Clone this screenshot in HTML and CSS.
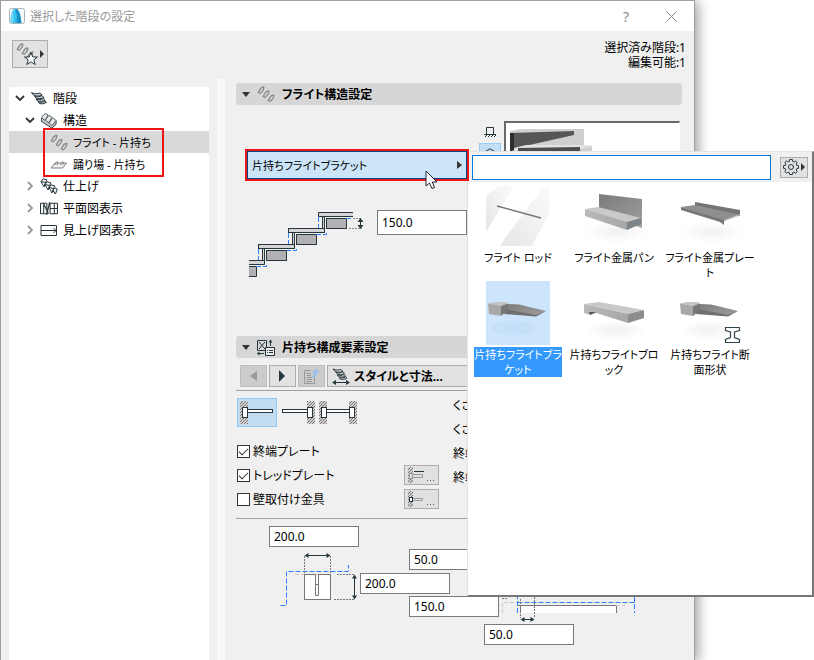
FILE: index.html
```html
<!DOCTYPE html>
<html lang="ja">

<head>
    <meta charset="UTF-8">
    <meta name="viewport" content="width=device-width, initial-scale=1.0">
    <title>選択した階段の設定</title>
    <link rel="stylesheet" href="styles.css">
</head>

<body>
    <!-- 共通アイコン -->
    <svg class="defs" width="0" height="0" aria-hidden="true">
        <defs>
            <linearGradient id="metal" x1="0" y1="0" x2="1" y2="1">
                <stop offset="0" stop-color="#7b7b7b" />
                <stop offset="1" stop-color="#a09f9e" />
            </linearGradient>
            <linearGradient id="stone" x1="0" y1="0" x2="1" y2="0">
                <stop offset="0" stop-color="#b9b9b9" />
                <stop offset="1" stop-color="#a6a6a6" />
            </linearGradient>
            <linearGradient id="sail" x1="0" y1="0" x2="1" y2="0">
                <stop offset="0" stop-color="#8fe3fb" />
                <stop offset="1" stop-color="#12b5ea" />
            </linearGradient>
            <linearGradient id="glass" x1="1" y1="0" x2="0" y2="1">
                <stop offset="0" stop-color="#fbfbfb" />
                <stop offset="1" stop-color="#e6e6e6" />
            </linearGradient>
            <radialGradient id="shade">
                <stop offset="0" stop-color="#000" stop-opacity=".06" />
                <stop offset="1" stop-color="#000" stop-opacity="0" />
            </radialGradient>
            <pattern id="hatch" width="3" height="3" patternUnits="userSpaceOnUse">
                <rect width="3" height="3" fill="#d0d0d0" />
                <path d="M0 3L3 0" stroke="#777" />
            </pattern>
        </defs>
        <symbol id="flight" viewBox="0 0 18 16">
            <g fill="#a9aeae" stroke="#7d8282" stroke-linejoin="round">
                <path d="M1 6.500L4 1.500L7 .800L6.500 4L3.500 7.500Z" />
                <path d="M6 10.500L9 5.500L12 4.800L11.500 8L8.500 11.500Z" />
                <path d="M11 14.500L14 9.500L17 8.800L16.500 12L13.500 15.500Z" />
                <path d="M3 6L5.500 2.500M8 10L10.500 6.500M13 14L15.500 10.500" stroke="#e4e6e6" />
            </g>
        </symbol>
        <symbol id="landing" viewBox="0 0 18 10">
            <g fill="#eee" stroke="#7d8282">
                <path d="M1 8.500L5 3.500H16.500L12.500 8.500Z" />
                <path d="M5 5.500L6.500 2.500H8L7 5.500M10.500 5.500L12 2.500H13.500L12.500 5.500" />
            </g>
        </symbol>
        <symbol id="stair" viewBox="0 0 16 13">
            <g fill="#c9ced0" stroke="#27363d" stroke-linejoin="round">
                <path d="M.5 1C3 2.500 6 2.500 9 1.500L11 3.500C8 5 5 5 2.500 3.500Z" />
                <path d="M3.500 4.500C6 5.500 9 5.500 11 4L13 6C10 7.500 7.500 7.500 5 6.500Z" />
                <path d="M5 7.500C7.500 8.300 10 8.300 12.500 7L14 9C12 10 9 10 6.500 9.500Z" />
                <path d="M7 10.500C9 11 12 11 14 9.500L15.500 11C13 12.500 10.500 12.500 8.500 12Z" />
            </g>
        </symbol>
        <symbol id="structure" viewBox="0 0 18 18">
            <g fill="#dfe2e3" stroke="#555f64" stroke-linejoin="round">
                <path d="M1 6.500V10L12 17L16.500 13V9" fill="#c3c8ca" stroke="#27363d" />
                <path d="M1 6L5 1.500L8 3L5 9ZM5 8.500L9 3.500L12 5.500L9 11.500ZM9 11.500L13 6L16.500 9L12 14.500Z" />
                <path d="M3 6L6 3M7 9L10 5.500M11 12L14.500 8.500" stroke="#fff" />
            </g>
        </symbol>
        <symbol id="finish" viewBox="0 0 18 17">
            <g fill="#f4f5f6" stroke="#27363d" stroke-linejoin="round">
                <path d="M1 3.500L3 .800L7 2L5.500 4.500Z" />
                <path d="M5 6.500L7 3.800L11 5L9.500 7.500Z" />
                <path d="M9 9.500L11 6.800L15 8L13.500 10.500Z" />
                <path d="M13 12.500L14.500 9.800L17.300 11L15.500 16Z" />
                <path d="M1 3.500L4 9L5.500 4.500M5 6.500L8 12L9.500 7.500M9 9.500L12 15L13.500 10.500M13 12.500L15.500 16" fill="none" />
            </g>
        </symbol>
        <symbol id="plan" viewBox="0 0 17 13">
            <path d="M.5 1.500H6.500M.5 11.500H6.500M.5 1.500V11.500M3.500 1.500V11.500M3.500 2L8 11.500M6.500 1.500V11.500M9 .5L6.500 12.500M9.500 1.500H16.500M9.500 11.500H16.500M9.500 1.500V11.500M13.500 1.500V11.500M16.500 1.500V11.500M9.500 6.500H16.500" fill="none" stroke="#27363d" />
        </symbol>
        <symbol id="ceiling" viewBox="0 0 18 17">
            <path d="M1 3.500H16.500V13.500H1ZM1 8.500H16M13.500 6L16 8.500L13.500 11" fill="none" stroke="#27363d" />
        </symbol>
        <symbol id="chevron" viewBox="0 0 10 10">
            <path d="M1 3L5 7L9 3" fill="none" stroke="currentColor" stroke-width="1.800" />
        </symbol>
        <symbol id="bracket" viewBox="0 0 64 64">
            <path d="M21 23L33 23.500L60 30L50 35L18 32Z" fill="url(#metal)" />
            <path d="M20 28L50 34L60 30L50 35.500L18 33Z" fill="#6f6f6f" />
            <path d="M2 22.500L9 21H20L22 22.500L15 25Z" fill="#c4c4c4" />
            <path d="M2 22.500L15 25V35L3 33Z" fill="#a8a8a8" />
            <path d="M15 25L22 22.500V29L15 35Z" fill="#777" />
        </symbol>
    </svg>

    <div class="dialog">
        <header class="titlebar">
            <svg class="app-icon" width="16" height="16" viewBox="0 0 16 16">
                <rect x=".5" y=".5" width="15" height="15" rx="2" fill="#f7f9fa" stroke="#a9b4ba" />
                <path d="M1 15C1 8 3 2 5 1H7C7.500 5 8 10 8 15Z" fill="url(#sail)" />
                <path d="M6.500 1H8C11 3 12 9 12.500 15H8C8 10 7.500 5 6.500 1Z" fill="#1591c9" />
            </svg>
            <h1>選択した階段の設定</h1>
            <button class="title-btn" type="button" aria-label="ヘルプ">?</button>
            <button class="title-btn" type="button" aria-label="閉じる">
                <svg width="11" height="11" viewBox="0 0 11 11"><path d="M.5 .5L10.500 10.500M10.500 .5L.5 10.500" stroke="#888" /></svg>
            </button>
        </header>

        <div class="toolbar">
            <button class="favorite" type="button" aria-label="お気に入り">
                <svg width="32" height="24" viewBox="0 0 32 24">
                    <use href="#flight" x="2" y="1" width="18" height="16" />
                    <path d="M17 10.500L18.800 15H23.500L19.800 17.800L21.200 22.500L17 19.800L12.800 22.500L14.200 17.800L10.500 15H15.200Z" fill="#fff" stroke="#27363d" />
                    <path d="M26 8V16L30 12Z" fill="#333" />
                </svg>
            </button>
            <p class="status">選択済み階段:1<br>編集可能:1</p>
        </div>

        <main class="main">
            <nav class="sidebar">
                <ul class="tree">
                    <li>
                        <div class="node"><svg class="arrow"><use href="#chevron" /></svg><svg class="icon small"><use href="#stair" /></svg>階段</div>
                        <ul class="level-2">
                            <li>
                                <div class="node"><svg class="arrow"><use href="#chevron" /></svg><svg class="icon"><use href="#structure" /></svg>構造</div>
                                <ul class="level-3 marked">
                                    <li><div class="node active"><svg class="icon"><use href="#flight" /></svg>フライト - 片持ち</div></li>
                                    <li><div class="node"><svg class="icon"><use href="#landing" /></svg>踊り場 - 片持ち</div></li>
                                </ul>
                            </li>
                            <li><div class="node"><svg class="arrow closed"><use href="#chevron" /></svg><svg class="icon"><use href="#finish" /></svg>仕上げ</div></li>
                            <li><div class="node"><svg class="arrow closed"><use href="#chevron" /></svg><svg class="icon"><use href="#plan" /></svg>平面図表示</div></li>
                            <li><div class="node"><svg class="arrow closed"><use href="#chevron" /></svg><svg class="icon"><use href="#ceiling" /></svg>見上げ図表示</div></li>
                        </ul>
                    </li>
                </ul>
            </nav>
            <div class="splitter"></div>

            <div class="content">
                <!-- フライト構造設定 -->
                <section class="panel-flight">
                    <h2 class="panel-title">
                        <svg width="8" height="5" viewBox="0 0 8 5"><path d="M0 0H8L4 5Z" fill="#333" /></svg>
                        <svg width="18" height="16"><use href="#flight" /></svg>
                        フライト構造設定
                    </h2>
                    <div class="flight-body">
                        <div class="flight-left">
                            <div class="combo">
                                <button class="combo-btn" type="button" aria-haspopup="true" aria-expanded="true">
                                    片持ちフライトブラケット
                                    <svg width="5" height="8" viewBox="0 0 5 8"><path d="M0 0V8L5 4Z" fill="#333" /></svg>
                                </button>
                                <svg class="cursor" width="13" height="20" viewBox="0 0 13 20">
                                    <path d="M1 1V16L4.500 13L7 18.500L9.500 17.500L7.300 12H12Z" fill="#fff" stroke="#223" />
                                </svg>

                                <!-- ポップアップ -->
                                <div class="popup">
                                    <div class="popup-bar">
                                        <input class="search" type="text" aria-label="検索">
                                        <button class="gear" type="button" aria-label="表示設定">
                                            <svg width="24" height="18" viewBox="0 0 24 18">
                                                <g fill="none" stroke="#27363d">
                                                    <circle cx="9" cy="9" r="2.500" />
                                                    <path d="M7.600 1.500H10.400L10.700 3.500L12.200 4.100L13.700 3L15.300 4.600L14.200 6.100L14.700 7.400L16.500 7.700V10.300L14.700 10.700L14.100 12.100L15.200 13.600L13.500 15.200L12 14.100L10.700 14.600L10.400 16.500H7.700L7.300 14.600L6 14.100L4.500 15.200L2.800 13.500L3.900 12L3.300 10.700L1.500 10.300V7.700L3.300 7.400L3.900 6L2.800 4.500L4.500 2.900L6 4L7.300 3.500Z" />
                                                </g>
                                                <path d="M19 5V13L23 9Z" fill="#333" />
                                            </svg>
                                        </button>
                                    </div>
                                    <ul class="gallery">
                                        <li>
                                            <svg class="thumb" viewBox="0 0 64 64">
                                                <path d="M0 12L13 2H28L0 48Z" fill="url(#glass)" />
                                                <path d="M22 50L56 5L63 1V30L46 62H14Z" fill="url(#glass)" />
                                                <path d="M11 22L55 34" stroke="#777" stroke-width="1.500" />
                                            </svg>
                                            <span>フライト ロッド</span>
                                        </li>
                                        <li>
                                            <svg class="thumb" viewBox="0 0 64 64">
                                                <ellipse cx="34" cy="48" rx="32" ry="11" fill="url(#shade)" />
                                                <path d="M17 10L60 15V44L17 28Z" fill="url(#metal)" />
                                                <path d="M3 25L16 23L59 34L45 39Z" fill="#c9c9c9" />
                                                <path d="M3 25L45 38V46L3 32Z" fill="url(#stone)" />
                                                <path d="M45 38L59 34V40L45 46Z" fill="#7d8488" />
                                            </svg>
                                            <span>フライト金属パン</span>
                                        </li>
                                        <li>
                                            <svg class="thumb" viewBox="0 0 64 64">
                                                <ellipse cx="34" cy="48" rx="32" ry="11" fill="url(#shade)" />
                                                <path d="M17 18L62 26V32L17 24Z" fill="#747474" />
                                                <path d="M3 23L17 21L62 31L46 37Z" fill="#8f8f8f" />
                                                <path d="M3 23L46 36V41L42 38L3 26Z" fill="#777" />
                                                <path d="M46 36L62 30V31L46 37.500Z" fill="#c0c0c0" />
                                            </svg>
                                            <span>フライト金属プレー<br>ト</span>
                                        </li>
                                        <li class="selected">
                                            <svg class="thumb" viewBox="0 0 64 64"><ellipse cx="27" cy="47" rx="22" ry="7" fill="#c2def7" opacity=".6" /><use href="#bracket" /></svg>
                                            <span>片持ちフライトブラ<br>ケット</span>
                                        </li>
                                        <li>
                                            <svg class="thumb" viewBox="0 0 64 64">
                                                <ellipse cx="34" cy="49" rx="32" ry="10" fill="url(#shade)" />
                                                <path d="M2 23L17 21L62 29L46 33Z" fill="#c9c9c9" />
                                                <path d="M2 23L46 33V42L14 32L8 34L2 32Z" fill="url(#stone)" />
                                                <path d="M46 33L62 29V37L46 42Z" fill="#8c8c8c" />
                                                <path d="M7 31H14L8 34Z" fill="#555" />
                                            </svg>
                                            <span>片持ちフライトブロ<br>ック</span>
                                        </li>
                                        <li>
                                            <svg class="thumb" viewBox="0 0 64 64">
                                                <ellipse cx="30" cy="49" rx="28" ry="10" fill="url(#shade)" />
                                                <use href="#bracket" />
                                                <path d="M47.500 46.500H61.500V49.500L56.500 51V56.500L61.500 58.500V61.500H47.500V58.500L52.500 56.500V51L47.500 49.500Z" fill="#fff" stroke="#33464d" stroke-width="1.200" />
                                            </svg>
                                            <span>片持ちフライト断<br>面形状</span>
                                        </li>
                                    </ul>
                                </div>
                            </div>

                            <div class="height-row">
                                <svg width="116" height="68" viewBox="0 0 116 68">
                                    <g fill="#d4d4d6" stroke="#27363d">
                                        <path d="M104 2.500H69.500V6.500H104" />
                                        <rect x="73.500" y="6.500" width="2" height="12" />
                                        <rect x="39.500" y="18.500" width="36" height="4" />
                                        <rect x="43.500" y="22.500" width="2" height="12" />
                                        <rect x="9.500" y="34.500" width="36" height="4" />
                                        <rect x="13.500" y="38.500" width="2" height="12" />
                                        <path d="M0 50.500H15.500V54.500H0" />
                                    </g>
                                    <g fill="#b1b0b5" stroke="#27363d">
                                        <rect x="77.500" y="8.500" width="20" height="10" />
                                        <rect x="47.500" y="24.500" width="20" height="10" />
                                        <rect x="17.500" y="40.500" width="20" height="10" />
                                        <path d="M0 56.500H7.500V66.500H0" />
                                    </g>
                                    <path d="M69.500 7V18M67 24.500H77.500V22M39.500 23V34M37 40.500H47.500V38M9.500 39V50M7 56.500H17.500V54M97 8.500H104" fill="none" stroke="#2a7fff" stroke-dasharray="5 2" />
                                    <path d="M104 8.500H113M100 18.500H113" stroke="#888" stroke-dasharray="2 1" />
                                    <path d="M111.500 9V18" stroke="#27363d" />
                                    <path d="M108.500 12L111.500 8L114.500 12ZM108.500 15L111.500 19L114.500 15Z" fill="#27363d" />
                                </svg>
                                <input class="field tall" type="text" value="150.0" aria-label="高さ">
                            </div>
                        </div>

                        <div class="view-modes">
                            <button class="mode" type="button" aria-label="側面">
                                <svg width="12" height="11" viewBox="0 0 12 11"><path d="M0 7.500H12M2.500 7V.5H9.500V7M1 10L3 8M4 10L6 8M7 10L9 8M10 10L12 8" fill="none" stroke="#27363d" /></svg>
                            </button>
                            <button class="mode on" type="button" aria-label="立体">
                                <svg width="12" height="12" viewBox="0 0 12 12"><path d="M.5 4L6 .800L11.500 4V9L6 11.500L.5 9ZM.5 4L6 6.500L11.500 4M6 6.500V11" fill="none" stroke="#27363d" /></svg>
                            </button>
                        </div>
                        <div class="preview">
                            <svg width="100" height="60" viewBox="0 0 100 60">
                                <path d="M4 8L16 6H78V24L86 23V42H4Z" fill="#cfcfcf" />
                                <path d="M4 10L68 8V12L10 25H4Z" fill="#555756" />
                                <path d="M4 10H8V27L4 29Z" fill="#2d2f2e" />
                                <path d="M8 25L20 22H86L76 26L10 28Z" fill="#e2e2e2" />
                                <path d="M12 25L74 24V28L12 32Z" fill="#4c4e4d" />
                            </svg>
                        </div>
                    </div>
                </section>

                <!-- 片持ち構成要素設定 -->
                <section class="panel-parts">
                    <h2 class="panel-title">
                        <svg width="8" height="5" viewBox="0 0 8 5"><path d="M0 0H8L4 5Z" fill="#333" /></svg>
                        <svg width="18" height="17" viewBox="0 0 18 17">
                            <path d="M.5 1.500H9.500V11.500H.5ZM2 3L8 10M8 3L2 10M13.500 1V7M0 14.500H7" fill="none" stroke="#27363d" />
                            <path d="M11.500 3.500L13.500 .5L15.500 3.500ZM0 14.500L2.500 12.500V16.500Z" fill="#27363d" />
                            <path d="M8.500 8.500H17.500V16.500H8.500Z" fill="#eee" stroke="#27363d" />
                            <path d="M10 11.500H11M12 11.500H16M10 13.500H11M12 13.500H16" stroke="#27363d" />
                        </svg>
                        片持ち構成要素設定
                    </h2>
                    <div class="style-row">
                        <button class="tool" type="button" aria-label="前へ" disabled><svg width="7" height="10" viewBox="0 0 7 10"><path d="M7 0V10L0 5Z" fill="#999" /></svg></button>
                        <button class="tool" type="button" aria-label="次へ"><svg width="7" height="12" viewBox="0 0 7 12"><path d="M0 0V12L6 6Z" fill="#27363d" /></svg></button>
                        <button class="tool" type="button" aria-label="転送" disabled>
                            <svg width="18" height="16" viewBox="0 0 18 16">
                                <path d="M8 2.500H1.500V15.500H11.500V8M3.500 5.500H8M3.500 7.500H8M3.500 9.500H9M3.500 11.500H9M3.500 13.500H9" fill="none" stroke="#999" />
                                <path d="M9 8C10 8 11 7 11 4.500H9L13 .5L17 4.500H14C14 8 12 10 9 10Z" fill="#9fc0ee" />
                            </svg>
                        </button>
                        <button class="tool style-btn" type="button">
                            <svg width="18" height="17" viewBox="0 0 18 17"><use href="#stair" width="16" height="12" /><path d="M2 14.500H16" stroke="#27363d" /><path d="M0 14.500L4 12V17ZM18 14.500L14 12V17Z" fill="#27363d" /></svg>
                            スタイルと寸法...
                        </button>
                    </div>
                    <div class="parts-body">
                        <div class="parts-left">
                            <div class="supports">
                                <button class="support on" type="button" aria-label="左側固定">
                                    <svg width="34" height="23" viewBox="0 0 34 23"><rect width="8" height="23" fill="url(#hatch)" /><rect x="2.500" y="6.500" width="5" height="10" fill="#fff" stroke="#27363d" /><rect x="7.500" y="8.500" width="25" height="3" fill="#fff" stroke="#27363d" /></svg>
                                </button>
                                <button class="support" type="button" aria-label="右側固定">
                                    <svg width="34" height="23" viewBox="0 0 34 23"><rect x="26" width="8" height="23" fill="url(#hatch)" /><rect x="26.500" y="6.500" width="5" height="10" fill="#fff" stroke="#27363d" /><rect x="1.500" y="8.500" width="25" height="3" fill="#fff" stroke="#27363d" /></svg>
                                </button>
                                <button class="support" type="button" aria-label="両側固定">
                                    <svg width="38" height="23" viewBox="0 0 38 23"><rect width="8" height="23" fill="url(#hatch)" /><rect x="30" width="8" height="23" fill="url(#hatch)" /><rect x="2.500" y="6.500" width="5" height="10" fill="#fff" stroke="#27363d" /><rect x="30.500" y="6.500" width="5" height="10" fill="#fff" stroke="#27363d" /><rect x="7.500" y="8.500" width="23" height="3" fill="#fff" stroke="#27363d" /></svg>
                                </button>
                            </div>
                            <div class="check-row">
                                <label><input type="checkbox" checked>終端プレート</label>
                            </div>
                            <div class="check-row">
                                <label><input type="checkbox" checked>トレッドプレート</label>
                                <button class="more" type="button" aria-label="トレッドプレートの詳細">
                                    <svg width="28" height="16" viewBox="0 0 28 16"><rect width="5" height="16" fill="url(#hatch)" /><rect x="1.500" y="6.500" width="3" height="5" fill="#ddd" stroke="#999" /><path d="M4.500 7.500H14.500V10.500H4.500" fill="none" stroke="#999" /><path d="M6 4.500H16" stroke="#27363d" /><path d="M19 13.500H20M22 13.500H23M25 13.500H26" stroke="#555" /></svg>
                                </button>
                            </div>
                            <div class="check-row">
                                <label><input type="checkbox">壁取付け金具</label>
                                <button class="more" type="button" aria-label="壁取付け金具の詳細">
                                    <svg width="28" height="16" viewBox="0 0 28 16"><rect width="5" height="16" fill="url(#hatch)" /><path d="M4.500 7.500H14.500V9.500H4.500" fill="none" stroke="#999" /><rect x="1.500" y="6.500" width="3" height="4" fill="#fff" stroke="#27363d" /><path d="M19 13.500H20M22 13.500H23M25 13.500H26" stroke="#555" /></svg>
                                </button>
                            </div>
                        </div>
                        <ul class="parts-list">
                            <li>くさ</li>
                            <li>くさ</li>
                            <li>終端</li>
                            <li>終端</li>
                        </ul>
                    </div>

                    <!-- 寸法図 -->
                    <div class="sizes">
                        <svg class="drawing" width="445" height="119" viewBox="0 0 445 119">
                            <rect x="284" y="80" width="95" height="7" fill="#fff" />
                            <g fill="#fff" stroke="#777">
                                <rect x="67.500" y="48.500" width="26" height="25" />
                                <path d="M78.500 48.500V69.500H81.500V48.500M78.500 58.500H81.500" />
                            </g>
                            <path d="M280 79.500H379.500V87M283.500 87V79.500" fill="none" stroke="#777" />
                            <path d="M43.500 79.500H49.500V45.500H111.500V39M280.500 87V71M280.500 76.500H397.500M397.500 71V87" fill="none" stroke="#2a7fff" stroke-dasharray="5 2" />
                            <path d="M265.500 87V76.500H280M379 79.500H387.500V77M58 48.500H67" fill="none" stroke="#ccc" stroke-dasharray="4 2" />
                            <path d="M67.500 30V48M93.500 30V48M100 48.500H118M97 73.500H118M283.500 73V92M297.500 71V92M265 72.500H270" fill="none" stroke="#777" stroke-dasharray="2 1" />
                            <path d="M69 29.500H92M117.500 50V72M285 93.500H296" stroke="#27363d" />
                            <path d="M67.500 29.500L71.500 27V32ZM93.500 29.500L89.500 27V32ZM117.500 48.500L115 52.500H120ZM117.500 73.500L115 69.500H120ZM283.500 93.500L287.500 91V96ZM297.500 93.500L293.500 91V96Z" fill="#27363d" />
                        </svg>
                        <input class="field plate-width" type="text" value="200.0" aria-label="プレート幅">
                        <input class="field plate-offset" type="text" value="50.0" aria-label="オフセット">
                        <input class="field plate-height" type="text" value="200.0" aria-label="プレート高さ">
                        <input class="field bracket-depth" type="text" value="150.0" aria-label="奥行き">
                        <input class="field bracket-gap" type="text" value="50.0" aria-label="間隔">
                    </div>
                </section>
            </div>
        </main>
    </div>
</body>

</html>
```
FILE: styles.css
```css
*,
*::before,
*::after {
    margin: 0;
    padding: 0;
    list-style: none;
    box-sizing: border-box;
}

body {
    background: #fff;
    color: #000;
    font: 12px/15px "Noto Sans", "Noto Sans CJK JP", sans-serif;
    font-feature-settings: "palt", "kern";
    overflow: hidden;
}

button,
input {
    font: inherit;
    font-feature-settings: inherit;
    color: inherit;
}

svg {
    display: block;
    flex: none;
}

.defs {
    position: absolute;
}

.dialog {
    min-height: 100vh;
    margin-right: 119px;
    background: #f0f0f0;
    border: 1px solid #a0a0a0;
    border-bottom: 0;
    box-shadow: 3px 2px 12px rgba(0, 0, 0, .4);
}

/* タイトルバー */

.titlebar {
    display: flex;
    align-items: center;
    height: 30px;
    padding: 0 8px;
    background: #fff;
}

.titlebar h1 {
    flex: 1;
    margin-left: 5px;
    font-size: 12px;
    font-weight: normal;
    color: #999;
}

.title-btn {
    display: flex;
    justify-content: center;
    align-items: center;
    width: 30px;
    height: 28px;
    margin-left: 15px;
    border: 0;
    background: none;
    font-size: 14px;
    color: #888;
}

.toolbar {
    display: flex;
    justify-content: space-between;
    align-items: flex-start;
    height: 48px;
    padding: 9px 8px 0 11px;
}

.favorite {
    width: 36px;
    height: 28px;
    padding: 1px;
    border: 1px solid #adadad;
    background: #e1e1e1;
}

.status {
    text-align: right;
}

/* ツリー */

.main {
    display: flex;
    padding-left: 8px;
}

.sidebar {
    flex: none;
    width: 200px;
    min-height: 573px;
    margin-top: 8px;
    background: #fff;
}

.splitter {
    flex: none;
    width: 8px;
    margin-left: 8px;
    background: #f8f8f8;
}

.node {
    display: flex;
    align-items: center;
    height: 22px;
    padding-left: 6px;
}

.level-2 .node {
    padding-left: 16px;
}

.level-3 .node {
    padding-left: 41px;
}

.node.active {
    background: #d9d9d9;
}

.arrow {
    width: 10px;
    height: 10px;
    margin-right: 5px;
    color: #333;
}

.closed {
    color: #999;
    transform: rotate(-90deg);
}

.icon {
    width: 18px;
    height: 17px;
    margin-right: 5px;
}

.small {
    width: 16px;
    height: 14px;
    margin: 0 6px 0 1px;
}

.marked {
    position: relative;
}

.marked::after {
    content: "";
    position: absolute;
    top: -3px;
    bottom: -2px;
    left: 34px;
    width: 121px;
    border: 2px solid #f01414;
}

.marked .node {
    font-size: 11px;
}

/* 設定パネル */

.content {
    flex: 1;
    min-width: 0;
    padding: 4px 12px 0 11px;
}

.panel-title {
    display: flex;
    align-items: center;
    gap: 7px;
    height: 22px;
    padding-left: 6px;
    border-radius: 3px;
    background: #d6d6d6;
    font-size: 12px;
}

.flight-body {
    display: flex;
    height: 231px;
    padding: 16px 2px 0 11px;
}

.flight-left {
    flex: none;
    width: 220px;
    padding-top: 30px;
}

.combo {
    position: relative;
    font-size: 11px;
}

.combo-btn {
    position: relative;
    z-index: 2;
    display: flex;
    justify-content: space-between;
    align-items: center;
    width: 100%;
    height: 28px;
    padding: 0 4px;
    border: 1px solid #00488c;
    outline: 2px solid #f01414;
    background: #cce4f7;
    white-space: nowrap;
}

.cursor {
    position: absolute;
    z-index: 3;
    top: 19px;
    left: 178px;
}

.height-row {
    display: flex;
    justify-content: space-between;
    margin-top: 31px;
    padding-left: 2px;
}

.field {
    width: 90px;
    height: 21px;
    padding: 0 4px;
    border: 1px solid #7a7a7a;
    background: #fff;
}

.tall {
    height: 25px;
}

.view-modes {
    flex: none;
    width: 22px;
    margin: 0 3px 0 12px;
}

.mode {
    display: flex;
    justify-content: center;
    align-items: center;
    width: 22px;
    height: 22px;
    border: 0;
    background: none;
}

.mode.on {
    border: 1px solid #99cdf5;
    background: #c2dff5;
}

.preview {
    flex: 1;
    height: 130px;
    border: 1px solid #fff;
    border-top: 2px solid #696969;
    border-left: 2px solid #696969;
    background: #fff;
}

/* ポップアップ */

.popup {
    position: absolute;
    z-index: 1;
    top: 0;
    left: 100%;
    width: 347px;
    height: 446px;
    border: 1px solid #e3e3e3;
    border-right: 2px solid #777;
    border-bottom: 2px solid #777;
    background: #fff;
}

.popup-bar {
    display: flex;
    justify-content: space-between;
    align-items: center;
    height: 30px;
    padding: 0 4px;
    background: #f0f0f0;
}

.search {
    width: 299px;
    height: 25px;
    padding: 0 4px;
    border: 1px solid #0078d7;
    background: #fff;
}

.gear {
    width: 28px;
    height: 21px;
    padding: 0 1px;
    border: 1px solid #adadad;
    background: #e1e1e1;
}

.gallery {
    display: grid;
    grid-template-columns: repeat(3, 96px);
    grid-auto-rows: 97px;
    padding: 2px;
}

.gallery li {
    display: flex;
    flex-direction: column;
    align-items: center;
    text-align: center;
}

.gallery span {
    margin-top: 2px;
    white-space: nowrap;
}

.thumb {
    width: 64px;
    height: 64px;
}

.selected .thumb {
    background: #cce4fc;
}

.selected span {
    background: #3399ff;
    color: #fff;
}

/* 構成要素 */

.style-row {
    display: flex;
    gap: 2px;
    margin-top: 7px;
    padding: 0 0 3px 4px;
    border-bottom: 1px solid #a0a0a0;
}

.tool {
    display: flex;
    justify-content: center;
    align-items: center;
    width: 27px;
    height: 22px;
    border: 1px solid #adadad;
    background: #e1e1e1;
}

.tool:disabled {
    background: #ccc;
    border-color: #bfbfbf;
}

.style-btn {
    flex: 1;
    justify-content: flex-start;
    gap: 4px;
    padding-left: 4px;
    font-weight: bold;
}

.parts-body {
    display: flex;
    gap: 14px;
    padding: 7px 0 7px 1px;
    border-bottom: 1px solid #a0a0a0;
}

.parts-left {
    width: 202px;
}

.supports {
    display: flex;
    gap: 4px;
    margin-bottom: 12px;
}

.support {
    display: flex;
    justify-content: center;
    align-items: center;
    height: 29px;
    border: 0;
    background: none;
}

.support.on {
    width: 40px;
    border: 1px solid #90c8f6;
    background: #c2dcf2;
}

.check-row {
    display: flex;
    justify-content: space-between;
    align-items: center;
    height: 24px;
}

.check-row label {
    display: flex;
    align-items: center;
    gap: 3px;
}

.check-row input {
    appearance: none;
    width: 13px;
    height: 13px;
    border: 1px solid #333;
    background: #fff;
}

.check-row input:checked::before {
    content: "";
    display: block;
    width: 9px;
    height: 5px;
    margin: 2px 0 0 1px;
    border: solid #333;
    border-width: 0 0 1px 1px;
    transform: rotate(-45deg);
}

.more {
    display: flex;
    justify-content: center;
    align-items: center;
    width: 35px;
    height: 20px;
    border: 1px solid #adadad;
    background: #e1e1e1;
}

.parts-list li {
    height: 24px;
    line-height: 16px;
}

/* 寸法図の上に入力欄を重ねる */

.sizes {
    display: grid;
    grid-template-columns: 1fr;
    grid-template-rows: 21px 22px 21px 21px 26px;
    gap: 2px;
    padding: 7px 0 14px 1px;
}

.drawing {
    grid-area: 1 / 1 / -1 / -1;
}

.sizes .field {
    grid-column: 1;
}

.plate-width {
    grid-row: 1;
    margin-left: 32px;
}

.plate-offset {
    grid-row: 2;
    margin-left: 172px;
}

.plate-height {
    grid-row: 3;
    margin-left: 123px;
}

.bracket-depth {
    grid-row: 4;
    margin-left: 172px;
}

.bracket-gap {
    grid-row: 5;
    align-self: end;
    margin-left: 247px;
}
```
